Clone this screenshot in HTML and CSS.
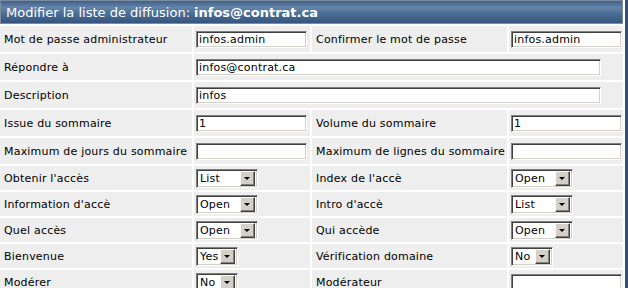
FILE: index.html
```html
<!DOCTYPE html>
<html lang="fr">
<head>
<meta charset="UTF-8">
<title>Modifier la liste de diffusion</title>
<link rel="stylesheet" href="styles.css">
</head>
<body>

<div class="panel">
  <form class="form-grid">
    <div class="title">Modifier la liste de diffusion: <b>infos@contrat.ca</b></div>

    <div class="label">Mot de passe administrateur</div>
    <div class="field"><input class="txt" type="text" value="infos.admin"></div>
    <div class="label">Confirmer le mot de passe</div>
    <div class="field"><input class="txt" type="text" value="infos.admin"></div>

    <div class="label">Répondre à</div>
    <div class="field wide"><input class="txt txt-wide" type="text" value="infos@contrat.ca"></div>

    <div class="label">Description</div>
    <div class="field wide"><input class="txt txt-wide" type="text" value="infos"></div>

    <div class="label">Issue du sommaire</div>
    <div class="field"><input class="txt" type="text" value="1"></div>
    <div class="label">Volume du sommaire</div>
    <div class="field"><input class="txt" type="text" value="1"></div>

    <div class="label">Maximum de jours du sommaire</div>
    <div class="field"><input class="txt" type="text" value=""></div>
    <div class="label">Maximum de lignes du sommaire</div>
    <div class="field"><input class="txt" type="text" value=""></div>

    <div class="label">Obtenir l'accès</div>
    <div class="field"><span class="combo"><select><option>List</option><option>Open</option></select><i class="combo-btn"></i></span></div>
    <div class="label">Index de l'accè</div>
    <div class="field"><span class="combo"><select><option>Open</option><option>List</option></select><i class="combo-btn"></i></span></div>

    <div class="label">Information d'accè</div>
    <div class="field"><span class="combo"><select><option>Open</option><option>List</option></select><i class="combo-btn"></i></span></div>
    <div class="label">Intro d'accè</div>
    <div class="field"><span class="combo"><select><option>List</option><option>Open</option></select><i class="combo-btn"></i></span></div>

    <div class="label">Quel accès</div>
    <div class="field"><span class="combo"><select><option>Open</option><option>List</option></select><i class="combo-btn"></i></span></div>
    <div class="label">Qui accède</div>
    <div class="field"><span class="combo"><select><option>Open</option><option>List</option></select><i class="combo-btn"></i></span></div>

    <div class="label">Bienvenue</div>
    <div class="field"><span class="combo combo-small"><select><option>Yes</option><option>No</option></select><i class="combo-btn"></i></span></div>
    <div class="label">Vérification domaine</div>
    <div class="field"><span class="combo combo-small"><select><option>No</option><option>Yes</option></select><i class="combo-btn"></i></span></div>

    <div class="label">Modérer</div>
    <div class="field"><span class="combo combo-small"><select><option>No</option><option>Yes</option></select><i class="combo-btn"></i></span></div>
    <div class="label">Modérateur</div>
    <div class="field"><input class="txt" type="text" value=""></div>
  </form>
</div>

</body>
</html>
```

FILE: styles.css
```css
body {
  margin: 0;
  background: #fff;
  font-family: Verdana, "DejaVu Sans", sans-serif;
  font-size: 11px;
  letter-spacing: 0.2px;
  color: #000;
}

.panel {
  width: 623px;
  padding-right: 2px;
  border-right: 3px solid #2f5079;
  height: 288px;
  overflow: hidden;
}

.form-grid {
  display: grid;
  grid-template-columns: 192px 116px 195px 114px;
  grid-template-rows: 24px repeat(5, 26px) repeat(5, 24px);
  gap: 2px;
  margin: 0;
}

.title {
  grid-column: 1 / -1;
  display: flex;
  align-items: center;
  padding-left: 5px;
  border: 1px solid #7b8ca0;
  background: linear-gradient(to bottom, #3f6189 0, #6684a9 30%, #4d6f97 55%, #34567e 100%);
  color: #fff;
  font-size: 13px;
  letter-spacing: 0;
}

.title b {
  margin-left: 4px;
}

.label {
  display: flex;
  align-items: center;
  padding-left: 4px;
  background: #eeeeee;
  white-space: nowrap;
}

.field {
  display: flex;
  align-items: center;
  padding-left: 2px;
  background: #eeeeee;
}

.field.wide {
  grid-column: 2 / -1;
}

/* champs style Windows classique */
.txt {
  box-sizing: border-box;
  width: 111px;
  height: 17px;
  margin: 0;
  padding: 0 2px;
  font: 11px Verdana, "DejaVu Sans", sans-serif;
  letter-spacing: 0.2px;
  color: #000;
  background: #fff;
  border: 1px solid;
  border-color: #808080 #fff #fff #808080;
  box-shadow: inset 1px 1px #404040, inset -1px -1px #d4d0c8;
  outline: none;
}

.txt-wide {
  width: 405px;
}

.combo {
  box-sizing: border-box;
  display: inline-flex;
  align-items: center;
  width: 62px;
  height: 19px;
  padding: 2px;
  background: #fff;
  border: 1px solid;
  border-color: #808080 #fff #fff #808080;
  box-shadow: inset 1px 1px #404040, inset -1px -1px #d4d0c8;
}

.combo-small {
  width: 42px;
}

.combo select {
  -webkit-appearance: none;
  appearance: none;
  flex: 1;
  min-width: 0;
  height: 15px;
  margin: 0;
  padding: 0 0 0 1px;
  border: none;
  background: #fff;
  font: 11px Verdana, "DejaVu Sans", sans-serif;
  letter-spacing: 0.2px;
  color: #000;
  outline: none;
}

.combo-btn {
  box-sizing: border-box;
  position: relative;
  width: 15px;
  height: 15px;
  background: #d4d0c8;
  border: 1px solid;
  border-color: #fff #404040 #404040 #fff;
  box-shadow: inset -1px -1px #808080;
}

.combo-btn::after {
  content: "";
  position: absolute;
  left: 3px;
  top: 5px;
  border-left: 3px solid transparent;
  border-right: 3px solid transparent;
  border-top: 3px solid #000;
}
```
